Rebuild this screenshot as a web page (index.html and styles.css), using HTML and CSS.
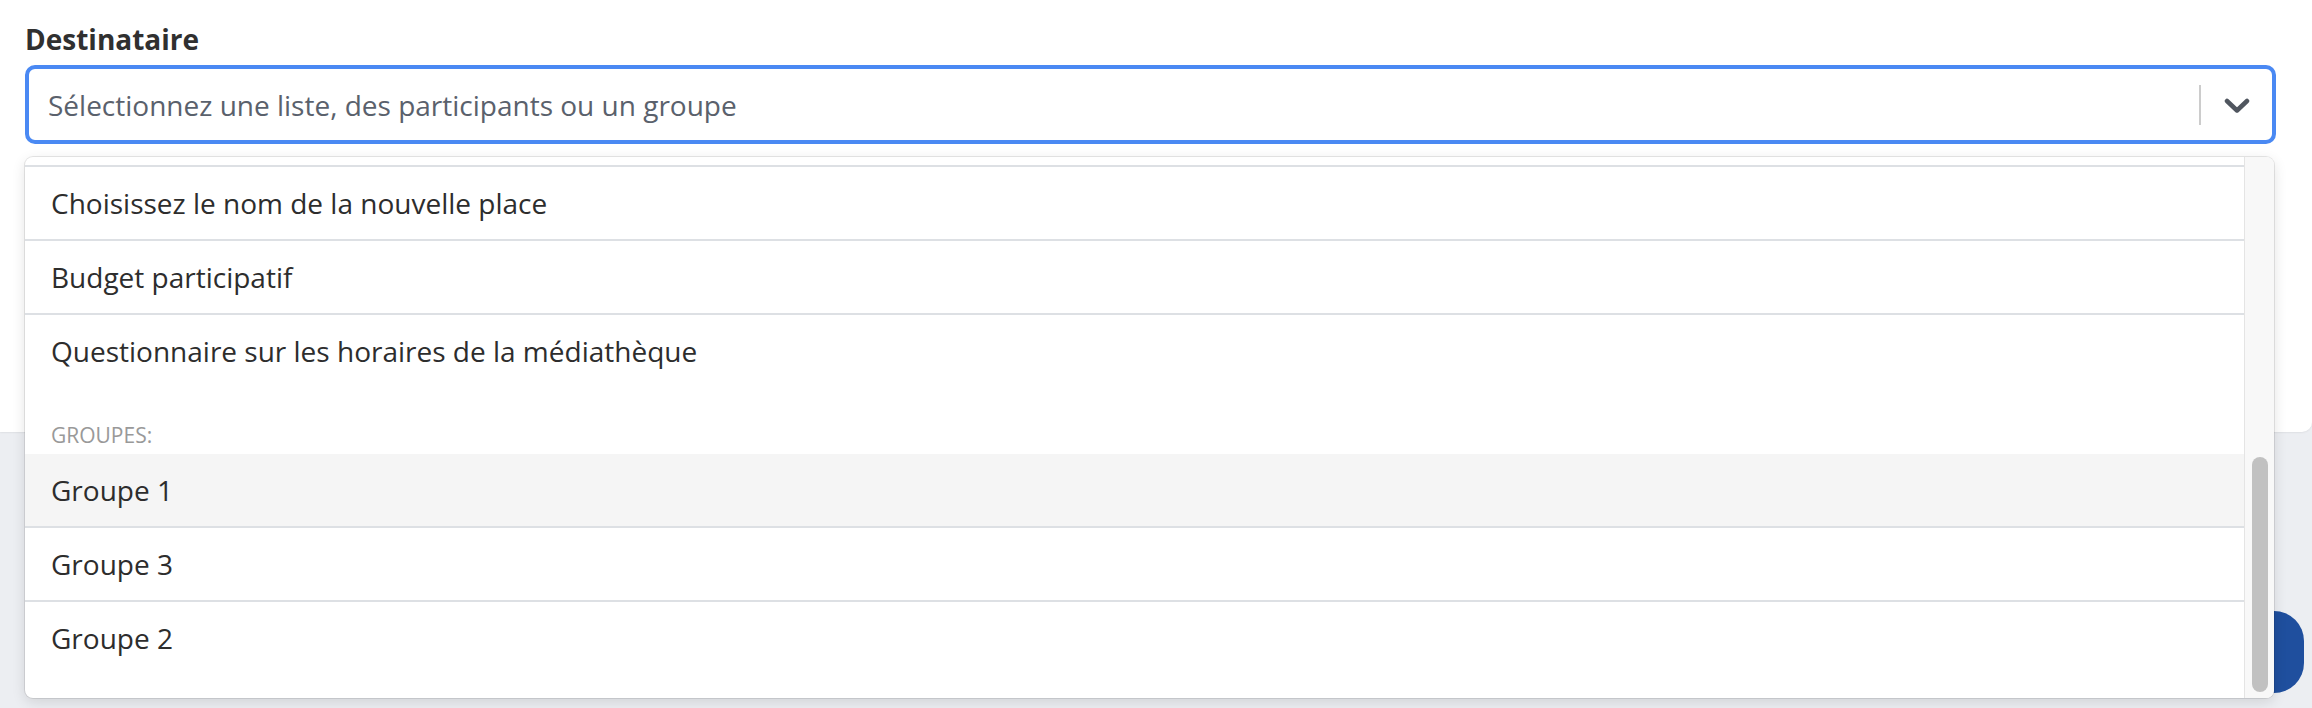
FILE: index.html
```html
<!DOCTYPE html>
<html lang="fr">
<head>
<meta charset="utf-8">
<title>Destinataire</title>
<link rel="stylesheet" href="styles.css">
</head>
<body>
<div class="page">
  <section class="card">
    <div class="field">
      <label class="label">Destinataire</label>
      <div class="select">
        <div class="placeholder">Sélectionnez une liste, des participants ou un groupe</div>
        <div class="indicators">
          <span class="sep"></span>
          <span class="chevron">
            <svg width="26" height="16" viewBox="0 0 26 16"><polyline points="3,3 13,12.5 23,3" fill="none" stroke="#50565f" stroke-width="4.5" stroke-linecap="round" stroke-linejoin="round"/></svg>
          </span>
        </div>
      </div>
    </div>
  </section>
  <footer class="footer">
    <button class="btn">Envoyer</button>
  </footer>

  <div class="menu">
    <div class="menu-list">
      <div class="spacer"></div>
      <div class="option">Choisissez le nom de la nouvelle place</div>
      <div class="option">Budget participatif</div>
      <div class="option last">Questionnaire sur les horaires de la médiathèque</div>
      <div class="group-heading">Groupes:</div>
      <div class="option focused">Groupe 1</div>
      <div class="option">Groupe 3</div>
      <div class="option last">Groupe 2</div>
    </div>
    <div class="scrollbar"><div class="thumb"></div></div>
  </div>
</div>
</body>
</html>
```
FILE: styles.css
```css
html, body {
  margin: 0;
  padding: 0;
}
body {
  background: #eceef2;
  font-family: "Open Sans", "Noto Sans", sans-serif;
  color: #333;
  overflow: hidden;
}
.page {
  position: relative;
  width: 2312px;
  height: 708px;
}
.card {
  background: #fff;
  height: 432px;
  box-sizing: border-box;
  padding: 21px 0 0 25px;
  border-bottom-right-radius: 10px;
  box-shadow: 0 1px 2px rgba(0, 0, 0, 0.06);
}
.label {
  display: block;
  font-weight: 700;
  font-size: 28px;
  line-height: 36px;
  color: #303030;
  margin-bottom: 8px;
}
.select {
  width: 2251px;
  height: 79px;
  box-sizing: border-box;
  border: 4px solid #4a89f3;
  border-radius: 10px;
  display: flex;
  align-items: center;
  background: #fff;
}
.placeholder {
  flex: 1;
  padding-left: 19px;
  font-size: 28px;
  line-height: 38px;
  color: #5a616c;
}
.indicators {
  display: flex;
  align-items: center;
  height: 100%;
}
.sep {
  width: 2px;
  height: 40px;
  background: #cccccc;
}
.chevron {
  width: 71px;
  display: flex;
  justify-content: center;
  align-items: center;
}
.chevron svg {
  display: block;
  margin-top: 2px;
}
.footer {
  display: flex;
  justify-content: flex-end;
  padding: 179px 8px 0 0;
}
.btn {
  width: 220px;
  height: 82px;
  border: 0;
  border-radius: 30px;
  background: #1f4f9e;
  color: #fff;
  font-family: inherit;
  font-size: 28px;
  font-weight: 600;
}
.menu {
  position: absolute;
  top: 157px;
  left: 25px;
  width: 2249px;
  height: 541px;
  background: #fff;
  border-radius: 8px;
  overflow: hidden;
  display: flex;
  z-index: 2;
  box-shadow: 0 0 0 1px rgba(0, 0, 0, 0.09), 0 4px 14px rgba(0, 0, 0, 0.12);
}
.menu-list {
  flex: 1;
  overflow: hidden;
}
.spacer {
  height: 8px;
  border-bottom: 2px solid #dde0e4;
}
.option {
  height: 72px;
  padding: 0 26px;
  display: flex;
  align-items: center;
  font-size: 28px;
  color: #2d2d2d;
  border-bottom: 2px solid #dde0e4;
}
.option.last {
  border-bottom: 0;
}
.option.focused {
  background: #f5f5f5;
}
.group-heading {
  padding: 36px 26px 0;
  height: 24px;
  line-height: 24px;
  margin-bottom: 7px;
  font-size: 21px;
  text-transform: uppercase;
  color: #999;
}
.scrollbar {
  width: 29px;
  background: #f8f8f8;
  border-left: 1px solid #e4e4e4;
  display: flex;
  flex-direction: column;
  justify-content: flex-end;
  align-items: center;
  padding-bottom: 6px;
}
.thumb {
  width: 16px;
  height: 235px;
  border-radius: 8px;
  background: #c1c1c1;
}
```
